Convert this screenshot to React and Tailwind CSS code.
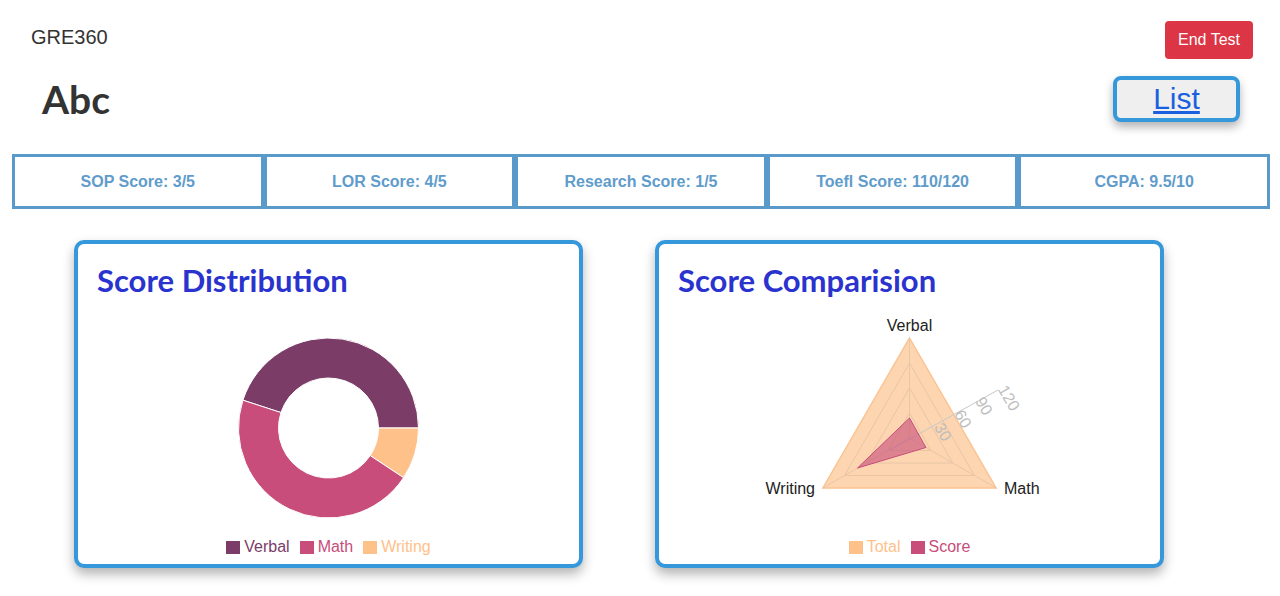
const scores = [
  { label: "SOP Score", value: "3/5" },
  { label: "LOR Score", value: "4/5" },
  { label: "Research Score", value: "1/5" },
  { label: "Toefl Score", value: "110/120" },
  { label: "CGPA", value: "9.5/10" },
];

function LegendItem({ color, text }) {
  return (
    <span className="flex items-center gap-[4px]">
      <span className="inline-block h-[13px] w-[14px]" style={{ backgroundColor: color }} />
      <span style={{ color }}>{text}</span>
    </span>
  );
}

function Card({ title, children, legend }) {
  return (
    <div className="flex h-[328px] w-[509px] flex-col rounded-[10px] border-4 border-[#3498db] bg-white shadow-[0_6px_12px_rgba(0,0,0,0.3)]">
      <h2 className="mt-[18px] pl-[19px] text-[31px] leading-[36px] font-bold text-[#2b33cf] [font-family:Lato,sans-serif]">
        {title}
      </h2>
      {children}
      <div className="mt-[8px] flex h-[18px] items-center justify-center gap-[10px] text-[16px] [font-family:'Liberation_Sans',Arial,sans-serif]">
        {legend}
      </div>
    </div>
  );
}

function Donut() {
  return (
    <svg width="501" height="232" viewBox="0 0 501 232">
      <path
        d="M164.9 102.19 A90 90 0 0 1 340.5 130 L300.5 130 A50 50 0 0 0 202.95 114.55 Z"
        fill="#7b3c67"
        stroke="#fff"
        strokeWidth="1"
      />
      <path
        d="M340.5 130 A90 90 0 0 1 325.55 179.67 L292.2 157.6 A50 50 0 0 0 300.5 130 Z"
        fill="#ffc18a"
        stroke="#fff"
        strokeWidth="1"
      />
      <path
        d="M325.55 179.67 A90 90 0 0 1 164.9 102.19 L202.95 114.55 A50 50 0 0 0 292.2 157.6 Z"
        fill="#c84d7a"
        stroke="#fff"
        strokeWidth="1"
      />
    </svg>
  );
}

function Radar() {
  const tri = (k) =>
    `${250.5},${140 - k} ${250.5 + 0.866 * k},${140 + 0.5 * k} ${250.5 - 0.866 * k},${140 + 0.5 * k}`;
  return (
    <svg width="501" height="232" viewBox="0 0 501 232">
      <polygon points={tri(100)} fill="#fdd5b1" stroke="#fbc391" strokeWidth="1.5" />
      {[75, 50, 25].map((k) => (
        <polygon key={k} points={tri(k)} fill="none" stroke="#e8c6a6" strokeWidth="1" />
      ))}
      <line x1="250.5" y1="140" x2="250.5" y2="40" stroke="#e8c6a6" />
      <line x1="250.5" y1="140" x2="337.1" y2="190" stroke="#e8c6a6" />
      <line x1="250.5" y1="140" x2="163.9" y2="190" stroke="#e8c6a6" />
      <line x1="231" y1="152" x2="339" y2="92" stroke="#c8c8c8" strokeWidth="1" />
      <polygon
        points="250.5,120 266.95,149.5 198.54,170"
        fill="#c84d7a"
        fillOpacity="0.6"
        stroke="#c84d7a"
        strokeWidth="1"
      />
      {[
        ["30", 284, 134],
        ["60", 304, 121],
        ["90", 325, 108],
        ["120", 350, 100],
      ].map(([t, x, y]) => (
        <text
          key={t}
          x={x}
          y={y}
          fill="#bdbdbd"
          fontSize="16"
          fontFamily="Liberation Sans, Arial, sans-serif"
          textAnchor="middle"
          dominantBaseline="central"
          transform={`rotate(60 ${x} ${y})`}
        >
          {t}
        </text>
      ))}
      <g fill="#222" fontSize="16" fontFamily="Liberation Sans, Arial, sans-serif">
        <text x="250.5" y="33" textAnchor="middle">Verbal</text>
        <text x="156" y="196" textAnchor="end">Writing</text>
        <text x="345" y="196">Math</text>
      </g>
    </svg>
  );
}

export default function App() {
  return (
    <div className="min-h-screen bg-white text-[#333] [font-family:'Liberation_Sans',Arial,sans-serif]">
      <div className="flex items-start justify-between pt-[21px] pl-[31px] pr-[27px]">
        <span className="mt-[4px] text-[20px] leading-[24px]">GRE360</span>
        <button className="h-[38px] rounded-[4px] bg-[#dc3545] px-[13px] text-[16px] text-white">
          End Test
        </button>
      </div>

      <div className="mt-[17px] flex items-center justify-between pl-[42px] pr-[40px]">
        <h1 className="text-[39px] leading-[46px] font-bold text-[#333] [font-family:Lato,sans-serif]">
          Abc
        </h1>
        <button className="flex h-[46px] w-[127px] items-center justify-center rounded-[8px] border-4 border-[#3498db] bg-[#efefef] shadow-[0_5px_10px_rgba(0,0,0,0.3)]">
          <span className="text-[30px] leading-none text-[#1a5fe0] underline">List</span>
        </button>
      </div>

      <div className="mt-[32px] ml-[12px] flex h-[55px] w-[1258px]">
        {scores.map((s) => (
          <div
            key={s.label}
            className="flex flex-1 items-center justify-center border-[3px] border-[#5a9acb] text-[16px] font-bold text-[#5f9ccc]"
          >
            {s.label}: {s.value}
          </div>
        ))}
      </div>

      <div className="mt-[31px] flex gap-[72px] pl-[74px]">
        <Card
          title="Score Distribution"
          legend={
            <>
              <LegendItem color="#7b3c67" text="Verbal" />
              <LegendItem color="#c84d7a" text="Math" />
              <LegendItem color="#ffc18a" text="Writing" />
            </>
          }
        >
          <Donut />
        </Card>
        <Card
          title="Score Comparision"
          legend={
            <>
              <LegendItem color="#ffc18a" text="Total" />
              <LegendItem color="#c84d7a" text="Score" />
            </>
          }
        >
          <Radar />
        </Card>
      </div>
    </div>
  );
}
